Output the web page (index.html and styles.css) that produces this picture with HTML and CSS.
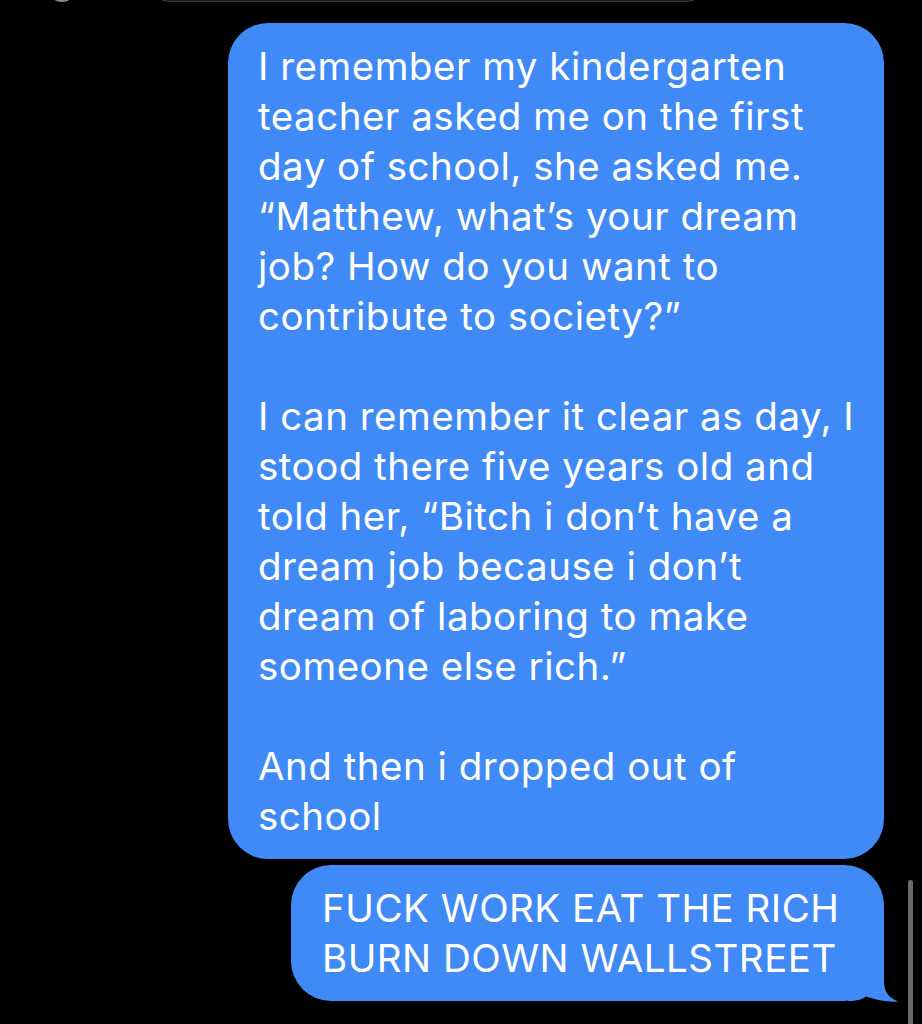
FILE: index.html
```html
<!DOCTYPE html>
<html>
<head>
<meta charset="utf-8">
<link rel="stylesheet" href="styles.css">
</head>
<body>
<div class="screen">
  <div class="topbar">
    <div class="avatar"></div>
    <div class="field"></div>
  </div>
  <div class="thread">
    <div class="bubble long">
      <p>I remember my kindergarten<br>teacher asked me on the first<br>day of school, she asked me.<br>“Matthew, what’s your dream<br>job? How do you want to<br>contribute to society?”</p>
      <p>I can remember it clear as day, I<br>stood there five years old and<br>told her, “Bitch i don’t have a<br>dream job because i don’t<br>dream of laboring to make<br>someone else rich.”</p>
      <p>And then i dropped out of<br>school</p>
    </div>
    <div class="bubble short">
      <p>FUCK WORK EAT THE RICH<br>BURN DOWN WALLSTREET</p>
      <svg class="tail" width="50" height="42" viewBox="0 0 50 42"><path d="M0 0 L36 0 L36 20 C36 31 41 37 50 40.5 C40 41.5 28 39 18 35.5 C14 38.5 9 40 0 40 Z" fill="#3f8af6"/></svg>
    </div>
  </div>
  <div class="scrollbar"></div>
</div>
</body>
</html>
```
FILE: styles.css
```css
html, body {
  margin: 0;
  padding: 0;
  background: #000;
}
.screen {
  position: relative;
  width: 922px;
  height: 1024px;
  overflow: hidden;
  background: #000;
  font-family: Inter, "Liberation Sans", sans-serif;
  color: #fff;
}
.topbar {
  display: flex;
  align-items: flex-end;
  height: 3px;
  margin-top: -1px;
  padding-left: 47px;
  gap: 76px;
}
.avatar {
  width: 30px;
  height: 30px;
  border-radius: 50%;
  background: #8a8a8e;
  flex: none;
}
.field {
  width: 548px;
  height: 30px;
  border-radius: 16px;
  background: #1c1c1e;
  border: 1px solid #3a3a3c;
}
.thread {
  display: flex;
  flex-direction: column;
  align-items: flex-end;
  gap: 6px;
  padding-top: 21px;
  padding-right: 38px;
}
.bubble {
  position: relative;
  background: #3f8af6;
  border-radius: 40px;
  box-sizing: border-box;
  font-size: 38.5px;
  line-height: 50px;
  letter-spacing: 0.5px;
  white-space: nowrap;
}
.bubble p {
  margin: 0;
}
.bubble p + p {
  margin-top: 50px;
}
.long {
  width: 656px;
  padding: 18px 38px 18px 30px;
}
.short {
  width: 593px;
  padding: 18px 40px 18px 31px;
}
.tail {
  position: absolute;
  right: -14px;
  bottom: -2px;
}
.scrollbar {
  position: absolute;
  right: 9px;
  top: 880px;
  width: 5px;
  height: 160px;
  border-radius: 3px;
  background: #6a6a6a;
}
```
